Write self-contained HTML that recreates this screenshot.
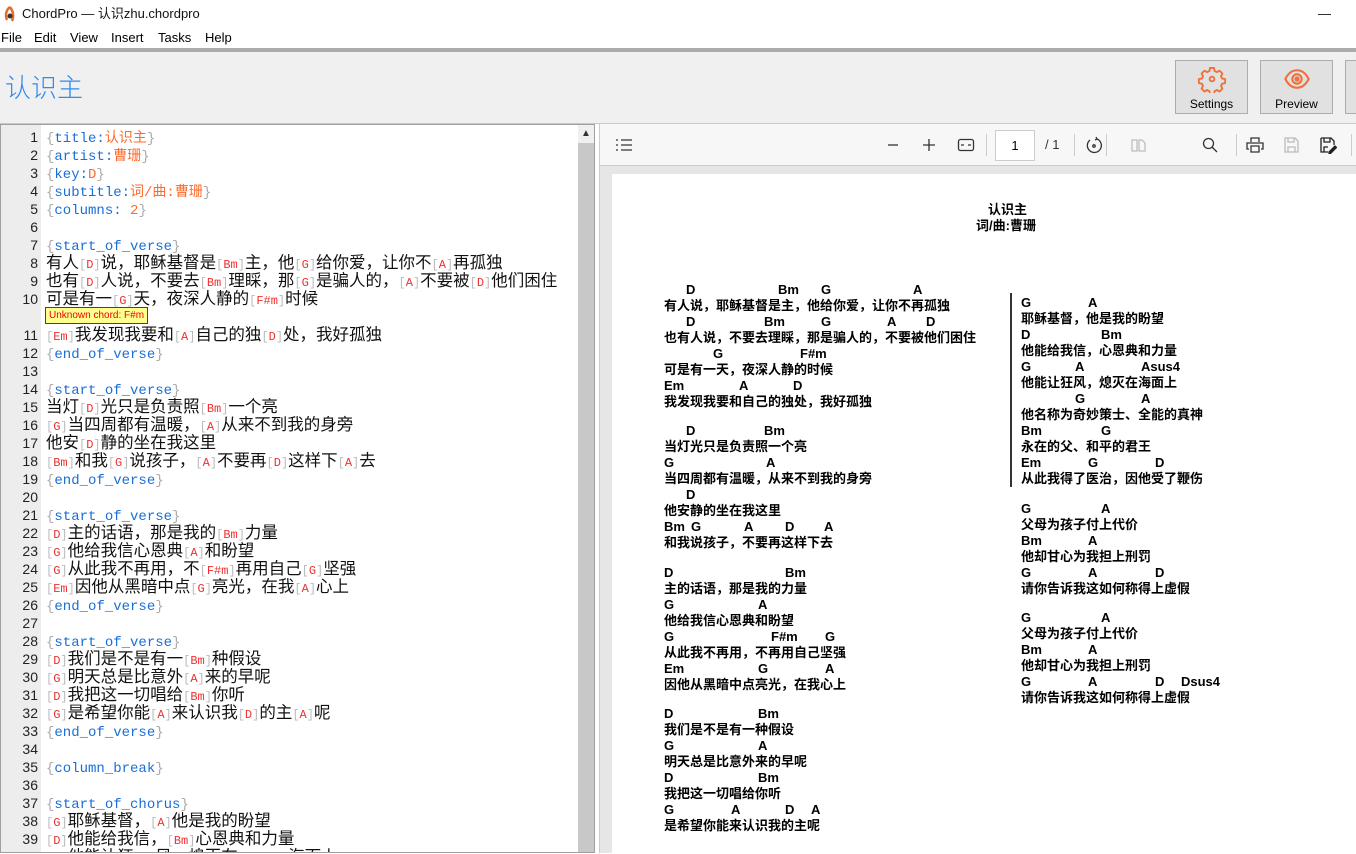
<!DOCTYPE html>
<html><head><meta charset="utf-8">
<style>
*{margin:0;padding:0;box-sizing:border-box}
body{width:1356px;height:853px;overflow:hidden;background:#fff;font-family:"Liberation Sans","Noto Sans CJK SC",sans-serif;position:relative}
.abs{position:absolute}
#title{top:0;left:0;height:28px;width:1356px;font-size:13px;line-height:28px;padding-left:22px;color:#111}
#menu{top:28px;left:0;height:20px;width:1356px;font-size:13px;line-height:20px}
#menu span{position:absolute;top:0}
#bar{top:48px;left:0;width:1356px;height:4px;background:#ababab}
#hdr{top:52px;left:0;width:1356px;height:72px;background:#f0f0f0;border-bottom:1px solid #c8c8c8}
#song{left:5px;top:17px;font-size:26px;color:#2f8cf0;font-family:"Noto Sans CJK SC",sans-serif;font-weight:300;line-height:36px}
.btn{top:8px;width:73px;height:54px;background:#e1e1e1;border:1px solid #adadad;text-align:center;font-size:12px}
.btn svg{display:block;margin:4px auto 0}
.btn div{margin-top:4px}
#ed{top:124px;left:0;width:595px;height:729px;border:1px solid #a0a0a0;background:#fff;overflow:hidden}
#gut{left:0;top:0;width:40px;height:729px;background:#ededed}
.ln{position:absolute;left:0;height:18px;width:577px;font-size:16.5px;line-height:18px;white-space:pre;font-family:"Noto Sans CJK SC",sans-serif;color:#111}
.ln .n{display:inline-block;text-align:right;padding-right:8px;font-size:14px;font-family:"Liberation Sans",sans-serif;color:#222;width:45px}
.d{font-family:"Liberation Mono",monospace;font-size:14px;color:#1a6ed8}
.d::before{content:"{";color:#aaa}.d::after{content:"}";color:#aaa}
.d em{font-style:normal;color:#ff6a2a;font-family:"Liberation Mono","Noto Sans CJK SC",monospace}
.s{font-family:"Liberation Mono",monospace;font-size:12px;color:#f03030;text-decoration:none}
.s::before{content:"[";color:#bbb}.s::after{content:"]";color:#bbb}
#tip{left:45px;top:307px;height:17px;background:#ffff90;border:1px solid #444;font-size:10px;color:#e00;line-height:15px;padding:0 3px}
#sb{left:577px;top:0;width:16px;height:729px;background:#f0f0f0}
#sbt{left:577px;top:18px;width:16px;height:711px;background:#c8c8c8}
#pv{top:124px;left:599px;width:757px;height:729px;background:#e6e6e6;border-left:1px solid #ccc}
#tb{left:0;top:0;width:757px;height:42px;background:#f7f7f7;border-bottom:1px solid #ccc}
#page{left:12px;top:50px;width:745px;height:680px;background:#fff}
.p{position:absolute;font-size:13px;font-weight:bold;line-height:16px;white-space:nowrap;color:#000;font-family:"Liberation Sans","Noto Sans CJK SC",sans-serif}
</style></head><body>
<div class="abs" id="title"><svg class="abs" style="left:3px;top:6px" width="14" height="17" viewBox="0 0 14 17"><path d="M7 1 C3 4 2 9 4 14 M7 1 C10 5 11 10 9 15" stroke="#e8692a" stroke-width="2.5" fill="none"/><circle cx="7" cy="10" r="2.5" fill="#333"/></svg>ChordPro — 认识zhu.chordpro<span class="abs" style="left:1318px;top:0">—</span></div>
<div class="abs" id="menu"><span style="left:1px">File</span><span style="left:34px">Edit</span><span style="left:70px">View</span><span style="left:111px">Insert</span><span style="left:158px">Tasks</span><span style="left:205px">Help</span></div>
<div class="abs" id="bar"></div>
<div class="abs" id="hdr">
<div class="abs" id="song">认识主</div>
<div class="abs btn" style="left:1175px"><svg width="28" height="28" viewBox="0 0 24 24" fill="none" stroke="#f0703a" stroke-width="1.6"><path d="M10.3 2.5h3.4l.5 2.6 1.9 1 2.4-1.2 2.4 2.4-1.2 2.4 1 1.9 2.6.5v3.4l-2.6.5-1 1.9 1.2 2.4-2.4 2.4-2.4-1.2-1.9 1-.5 2.6h-3.4l-.5-2.6-1.9-1-2.4 1.2-2.4-2.4 1.2-2.4-1-1.9-2.6-.5v-3.4l2.6-.5 1-1.9-1.2-2.4 2.4-2.4 2.4 1.2 1.9-1z"/><circle cx="12" cy="12" r="2"/></svg><div>Settings</div></div>
<div class="abs btn" style="left:1260px"><svg width="28" height="28" viewBox="0 0 24 24" fill="none" stroke="#f0703a" stroke-width="1.8"><path d="M2 12C5 6 9 4.5 12 4.5S19 6 22 12C19 18 15 19.5 12 19.5S5 18 2 12z"/><circle cx="12" cy="12" r="4"/><circle cx="12" cy="12" r="1.3" fill="#f0703a"/></svg><div>Preview</div></div>
<div class="abs btn" style="left:1345px"></div>
</div>
<div class="abs" id="ed">
<div class="abs" id="gut"></div>
<div class="abs" id="sb"></div><div class="abs" id="sbt"></div>
<div class="abs" style="left:580px;top:3px;font-size:10px;color:#333">▲</div>
<div class="ln" style="top:1px"><span class="n">1</span><span class="d">title:<em>认识主</em></span></div>
<div class="ln" style="top:19px"><span class="n">2</span><span class="d">artist:<em>曹珊</em></span></div>
<div class="ln" style="top:37px"><span class="n">3</span><span class="d">key:<em>D</em></span></div>
<div class="ln" style="top:55px"><span class="n">4</span><span class="d">subtitle:<em>词/曲:曹珊</em></span></div>
<div class="ln" style="top:73px"><span class="n">5</span><span class="d">columns: <em>2</em></span></div>
<div class="ln" style="top:91px"><span class="n">6</span></div>
<div class="ln" style="top:109px"><span class="n">7</span><span class="d">start_of_verse</span></div>
<div class="ln" style="top:127px"><span class="n">8</span>有人<s class="s">D</s>说，耶稣基督是<s class="s">Bm</s>主，他<s class="s">G</s>给你爱，让你不<s class="s">A</s>再孤独</div>
<div class="ln" style="top:145px"><span class="n">9</span>也有<s class="s">D</s>人说，不要去<s class="s">Bm</s>理睬，那<s class="s">G</s>是骗人的，<s class="s">A</s>不要被<s class="s">D</s>他们困住</div>
<div class="ln" style="top:163px"><span class="n">10</span>可是有一<s class="s">G</s>天，夜深人静的<s class="s">F#m</s>时候</div>
<div class="ln" style="top:199px"><span class="n">11</span><s class="s">Em</s>我发现我要和<s class="s">A</s>自己的独<s class="s">D</s>处，我好孤独</div>
<div class="ln" style="top:217px"><span class="n">12</span><span class="d">end_of_verse</span></div>
<div class="ln" style="top:235px"><span class="n">13</span></div>
<div class="ln" style="top:253px"><span class="n">14</span><span class="d">start_of_verse</span></div>
<div class="ln" style="top:271px"><span class="n">15</span>当灯<s class="s">D</s>光只是负责照<s class="s">Bm</s>一个亮</div>
<div class="ln" style="top:289px"><span class="n">16</span><s class="s">G</s>当四周都有温暖，<s class="s">A</s>从来不到我的身旁</div>
<div class="ln" style="top:307px"><span class="n">17</span>他安<s class="s">D</s>静的坐在我这里</div>
<div class="ln" style="top:325px"><span class="n">18</span><s class="s">Bm</s>和我<s class="s">G</s>说孩子，<s class="s">A</s>不要再<s class="s">D</s>这样下<s class="s">A</s>去</div>
<div class="ln" style="top:343px"><span class="n">19</span><span class="d">end_of_verse</span></div>
<div class="ln" style="top:361px"><span class="n">20</span></div>
<div class="ln" style="top:379px"><span class="n">21</span><span class="d">start_of_verse</span></div>
<div class="ln" style="top:397px"><span class="n">22</span><s class="s">D</s>主的话语，那是我的<s class="s">Bm</s>力量</div>
<div class="ln" style="top:415px"><span class="n">23</span><s class="s">G</s>他给我信心恩典<s class="s">A</s>和盼望</div>
<div class="ln" style="top:433px"><span class="n">24</span><s class="s">G</s>从此我不再用，不<s class="s">F#m</s>再用自己<s class="s">G</s>坚强</div>
<div class="ln" style="top:451px"><span class="n">25</span><s class="s">Em</s>因他从黑暗中点<s class="s">G</s>亮光，在我<s class="s">A</s>心上</div>
<div class="ln" style="top:469px"><span class="n">26</span><span class="d">end_of_verse</span></div>
<div class="ln" style="top:487px"><span class="n">27</span></div>
<div class="ln" style="top:505px"><span class="n">28</span><span class="d">start_of_verse</span></div>
<div class="ln" style="top:523px"><span class="n">29</span><s class="s">D</s>我们是不是有一<s class="s">Bm</s>种假设</div>
<div class="ln" style="top:541px"><span class="n">30</span><s class="s">G</s>明天总是比意外<s class="s">A</s>来的早呢</div>
<div class="ln" style="top:559px"><span class="n">31</span><s class="s">D</s>我把这一切唱给<s class="s">Bm</s>你听</div>
<div class="ln" style="top:577px"><span class="n">32</span><s class="s">G</s>是希望你能<s class="s">A</s>来认识我<s class="s">D</s>的主<s class="s">A</s>呢</div>
<div class="ln" style="top:595px"><span class="n">33</span><span class="d">end_of_verse</span></div>
<div class="ln" style="top:613px"><span class="n">34</span></div>
<div class="ln" style="top:631px"><span class="n">35</span><span class="d">column_break</span></div>
<div class="ln" style="top:649px"><span class="n">36</span></div>
<div class="ln" style="top:667px"><span class="n">37</span><span class="d">start_of_chorus</span></div>
<div class="ln" style="top:685px"><span class="n">38</span><s class="s">G</s>耶稣基督，<s class="s">A</s>他是我的盼望</div>
<div class="ln" style="top:703px"><span class="n">39</span><s class="s">D</s>他能给我信，<s class="s">Bm</s>心恩典和力量</div>
<div class="ln" style="top:721px"><span class="n">40</span><s class="s">G</s>他能让狂<s class="s">A</s>风，熄灭在<s class="s">Asus4</s>海面上</div>
</div>
<div class="abs" id="tip">Unknown chord: F#m</div>
<div class="abs" id="pv">
<div class="abs" id="tb">
<svg class="abs" style="left:15px;top:14px" width="18" height="14" viewBox="0 0 18 14" stroke="#333" stroke-width="1.3"><path d="M1 2h2M6 2h11M1 7h2M6 7h11M1 12h2M6 12h11"/></svg>
<svg class="abs" style="left:285px;top:13px" width="16" height="16" stroke="#333" stroke-width="1.3"><path d="M3 8h10"/></svg>
<svg class="abs" style="left:321px;top:13px" width="16" height="16" stroke="#333" stroke-width="1.3"><path d="M2 8h12M8 2v12"/></svg>
<svg class="abs" style="left:357px;top:13px" width="18" height="16" fill="none" stroke="#333" stroke-width="1.3"><rect x="1.5" y="2.5" width="15" height="11" rx="2"/><path d="M4 8h3M11 8h3"/></svg>
<div class="abs" style="left:386px;top:10px;width:1px;height:22px;background:#ccc"></div>
<div class="abs" style="left:395px;top:6px;width:40px;height:31px;background:#fff;border:1px solid #ccc;font-size:13px;text-align:center;line-height:29px">1</div>
<div class="abs" style="left:445px;top:13px;font-size:13px;color:#333">/ 1</div>
<div class="abs" style="left:474px;top:10px;width:1px;height:22px;background:#ccc"></div>
<svg class="abs" style="left:485px;top:12px" width="18" height="18" fill="none" stroke="#333" stroke-width="1.3"><path d="M5 4A7 7 0 1 0 12 3M12 3l-1 -2M12 3l-2 1"/><circle cx="9" cy="10" r="1.2"/></svg>
<div class="abs" style="left:506px;top:10px;width:1px;height:22px;background:#ccc"></div>
<svg class="abs" style="left:530px;top:13px" width="16" height="16" fill="none" stroke="#bbb" stroke-width="1.2"><path d="M2 3h5v11H2zM9 3h3l3 3v8H9z"/></svg>
<svg class="abs" style="left:601px;top:12px" width="18" height="18" fill="none" stroke="#333" stroke-width="1.3"><circle cx="7.5" cy="7.5" r="5"/><path d="M11 11l5 5"/></svg>
<div class="abs" style="left:636px;top:10px;width:1px;height:22px;background:#ccc"></div>
<svg class="abs" style="left:646px;top:12px" width="18" height="18" fill="none" stroke="#333" stroke-width="1.3"><path d="M5 6V2h8v4M3 13H1V7h16v6h-2M5 10h8v6H5z"/></svg>
<svg class="abs" style="left:683px;top:12px" width="16" height="18" fill="none" stroke="#bbb" stroke-width="1.3"><path d="M2 2h10l3 3v11H2zM5 2v4h6V2M5 16v-5h7v5"/></svg>
<svg class="abs" style="left:719px;top:12px" width="18" height="18" fill="none" stroke="#222" stroke-width="1.3"><path d="M2 2h10l3 3v4M9 16H2V2M5 2v4h6V2M5 16v-5h4"/><path d="M10 16l6-6 1.5 1.5-6 6H10z" fill="#222"/></svg>
<div class="abs" style="left:751px;top:10px;width:1px;height:22px;background:#ccc"></div>
</div>
<div class="abs" id="page"></div>
</div>
<div class="p" style="left:988px;top:202px">认识主</div>
<div class="p" style="left:976px;top:218px">词/曲:曹珊</div>
<div class="abs" style="left:1010px;top:293px;width:2px;height:194px;background:#333"></div>
<div class="p" style="left:686px;top:282px">D</div><div class="p" style="left:778px;top:282px">Bm</div><div class="p" style="left:821px;top:282px">G</div><div class="p" style="left:913px;top:282px">A</div>
<div class="p" style="left:664px;top:298px">有人说，耶稣基督是主，他给你爱，让你不再孤独</div>
<div class="p" style="left:686px;top:314px">D</div><div class="p" style="left:764px;top:314px">Bm</div><div class="p" style="left:821px;top:314px">G</div><div class="p" style="left:887px;top:314px">A</div><div class="p" style="left:926px;top:314px">D</div>
<div class="p" style="left:664px;top:330px">也有人说，不要去理睬，那是骗人的，不要被他们困住</div>
<div class="p" style="left:713px;top:346px">G</div><div class="p" style="left:800px;top:346px">F#m</div>
<div class="p" style="left:664px;top:362px">可是有一天，夜深人静的时候</div>
<div class="p" style="left:664px;top:378px">Em</div><div class="p" style="left:739px;top:378px">A</div><div class="p" style="left:793px;top:378px">D</div>
<div class="p" style="left:664px;top:394px">我发现我要和自己的独处，我好孤独</div>
<div class="p" style="left:686px;top:423px">D</div><div class="p" style="left:764px;top:423px">Bm</div>
<div class="p" style="left:664px;top:439px">当灯光只是负责照一个亮</div>
<div class="p" style="left:664px;top:455px">G</div><div class="p" style="left:766px;top:455px">A</div>
<div class="p" style="left:664px;top:471px">当四周都有温暖，从来不到我的身旁</div>
<div class="p" style="left:686px;top:487px">D</div>
<div class="p" style="left:664px;top:503px">他安静的坐在我这里</div>
<div class="p" style="left:664px;top:519px">Bm</div><div class="p" style="left:691px;top:519px">G</div><div class="p" style="left:744px;top:519px">A</div><div class="p" style="left:785px;top:519px">D</div><div class="p" style="left:824px;top:519px">A</div>
<div class="p" style="left:664px;top:535px">和我说孩子，不要再这样下去</div>
<div class="p" style="left:664px;top:565px">D</div><div class="p" style="left:785px;top:565px">Bm</div>
<div class="p" style="left:664px;top:581px">主的话语，那是我的力量</div>
<div class="p" style="left:664px;top:597px">G</div><div class="p" style="left:758px;top:597px">A</div>
<div class="p" style="left:664px;top:613px">他给我信心恩典和盼望</div>
<div class="p" style="left:664px;top:629px">G</div><div class="p" style="left:771px;top:629px">F#m</div><div class="p" style="left:825px;top:629px">G</div>
<div class="p" style="left:664px;top:645px">从此我不再用，不再用自己坚强</div>
<div class="p" style="left:664px;top:661px">Em</div><div class="p" style="left:758px;top:661px">G</div><div class="p" style="left:825px;top:661px">A</div>
<div class="p" style="left:664px;top:677px">因他从黑暗中点亮光，在我心上</div>
<div class="p" style="left:664px;top:706px">D</div><div class="p" style="left:758px;top:706px">Bm</div>
<div class="p" style="left:664px;top:722px">我们是不是有一种假设</div>
<div class="p" style="left:664px;top:738px">G</div><div class="p" style="left:758px;top:738px">A</div>
<div class="p" style="left:664px;top:754px">明天总是比意外来的早呢</div>
<div class="p" style="left:664px;top:770px">D</div><div class="p" style="left:758px;top:770px">Bm</div>
<div class="p" style="left:664px;top:786px">我把这一切唱给你听</div>
<div class="p" style="left:664px;top:802px">G</div><div class="p" style="left:731px;top:802px">A</div><div class="p" style="left:785px;top:802px">D</div><div class="p" style="left:811px;top:802px">A</div>
<div class="p" style="left:664px;top:818px">是希望你能来认识我的主呢</div>
<div class="p" style="left:1021px;top:295px">G</div><div class="p" style="left:1088px;top:295px">A</div>
<div class="p" style="left:1021px;top:311px">耶稣基督，他是我的盼望</div>
<div class="p" style="left:1021px;top:327px">D</div><div class="p" style="left:1101px;top:327px">Bm</div>
<div class="p" style="left:1021px;top:343px">他能给我信，心恩典和力量</div>
<div class="p" style="left:1021px;top:359px">G</div><div class="p" style="left:1075px;top:359px">A</div><div class="p" style="left:1141px;top:359px">Asus4</div>
<div class="p" style="left:1021px;top:375px">他能让狂风，熄灭在海面上</div>
<div class="p" style="left:1075px;top:391px">G</div><div class="p" style="left:1141px;top:391px">A</div>
<div class="p" style="left:1021px;top:407px">他名称为奇妙策士、全能的真神</div>
<div class="p" style="left:1021px;top:423px">Bm</div><div class="p" style="left:1101px;top:423px">G</div>
<div class="p" style="left:1021px;top:439px">永在的父、和平的君王</div>
<div class="p" style="left:1021px;top:455px">Em</div><div class="p" style="left:1088px;top:455px">G</div><div class="p" style="left:1155px;top:455px">D</div>
<div class="p" style="left:1021px;top:471px">从此我得了医治，因他受了鞭伤</div>
<div class="p" style="left:1021px;top:501px">G</div><div class="p" style="left:1101px;top:501px">A</div>
<div class="p" style="left:1021px;top:517px">父母为孩子付上代价</div>
<div class="p" style="left:1021px;top:533px">Bm</div><div class="p" style="left:1088px;top:533px">A</div>
<div class="p" style="left:1021px;top:549px">他却甘心为我担上刑罚</div>
<div class="p" style="left:1021px;top:565px">G</div><div class="p" style="left:1088px;top:565px">A</div><div class="p" style="left:1155px;top:565px">D</div>
<div class="p" style="left:1021px;top:581px">请你告诉我这如何称得上虚假</div>
<div class="p" style="left:1021px;top:610px">G</div><div class="p" style="left:1101px;top:610px">A</div>
<div class="p" style="left:1021px;top:626px">父母为孩子付上代价</div>
<div class="p" style="left:1021px;top:642px">Bm</div><div class="p" style="left:1088px;top:642px">A</div>
<div class="p" style="left:1021px;top:658px">他却甘心为我担上刑罚</div>
<div class="p" style="left:1021px;top:674px">G</div><div class="p" style="left:1088px;top:674px">A</div><div class="p" style="left:1155px;top:674px">D</div><div class="p" style="left:1181px;top:674px">Dsus4</div>
<div class="p" style="left:1021px;top:690px">请你告诉我这如何称得上虚假</div>
</body></html>
